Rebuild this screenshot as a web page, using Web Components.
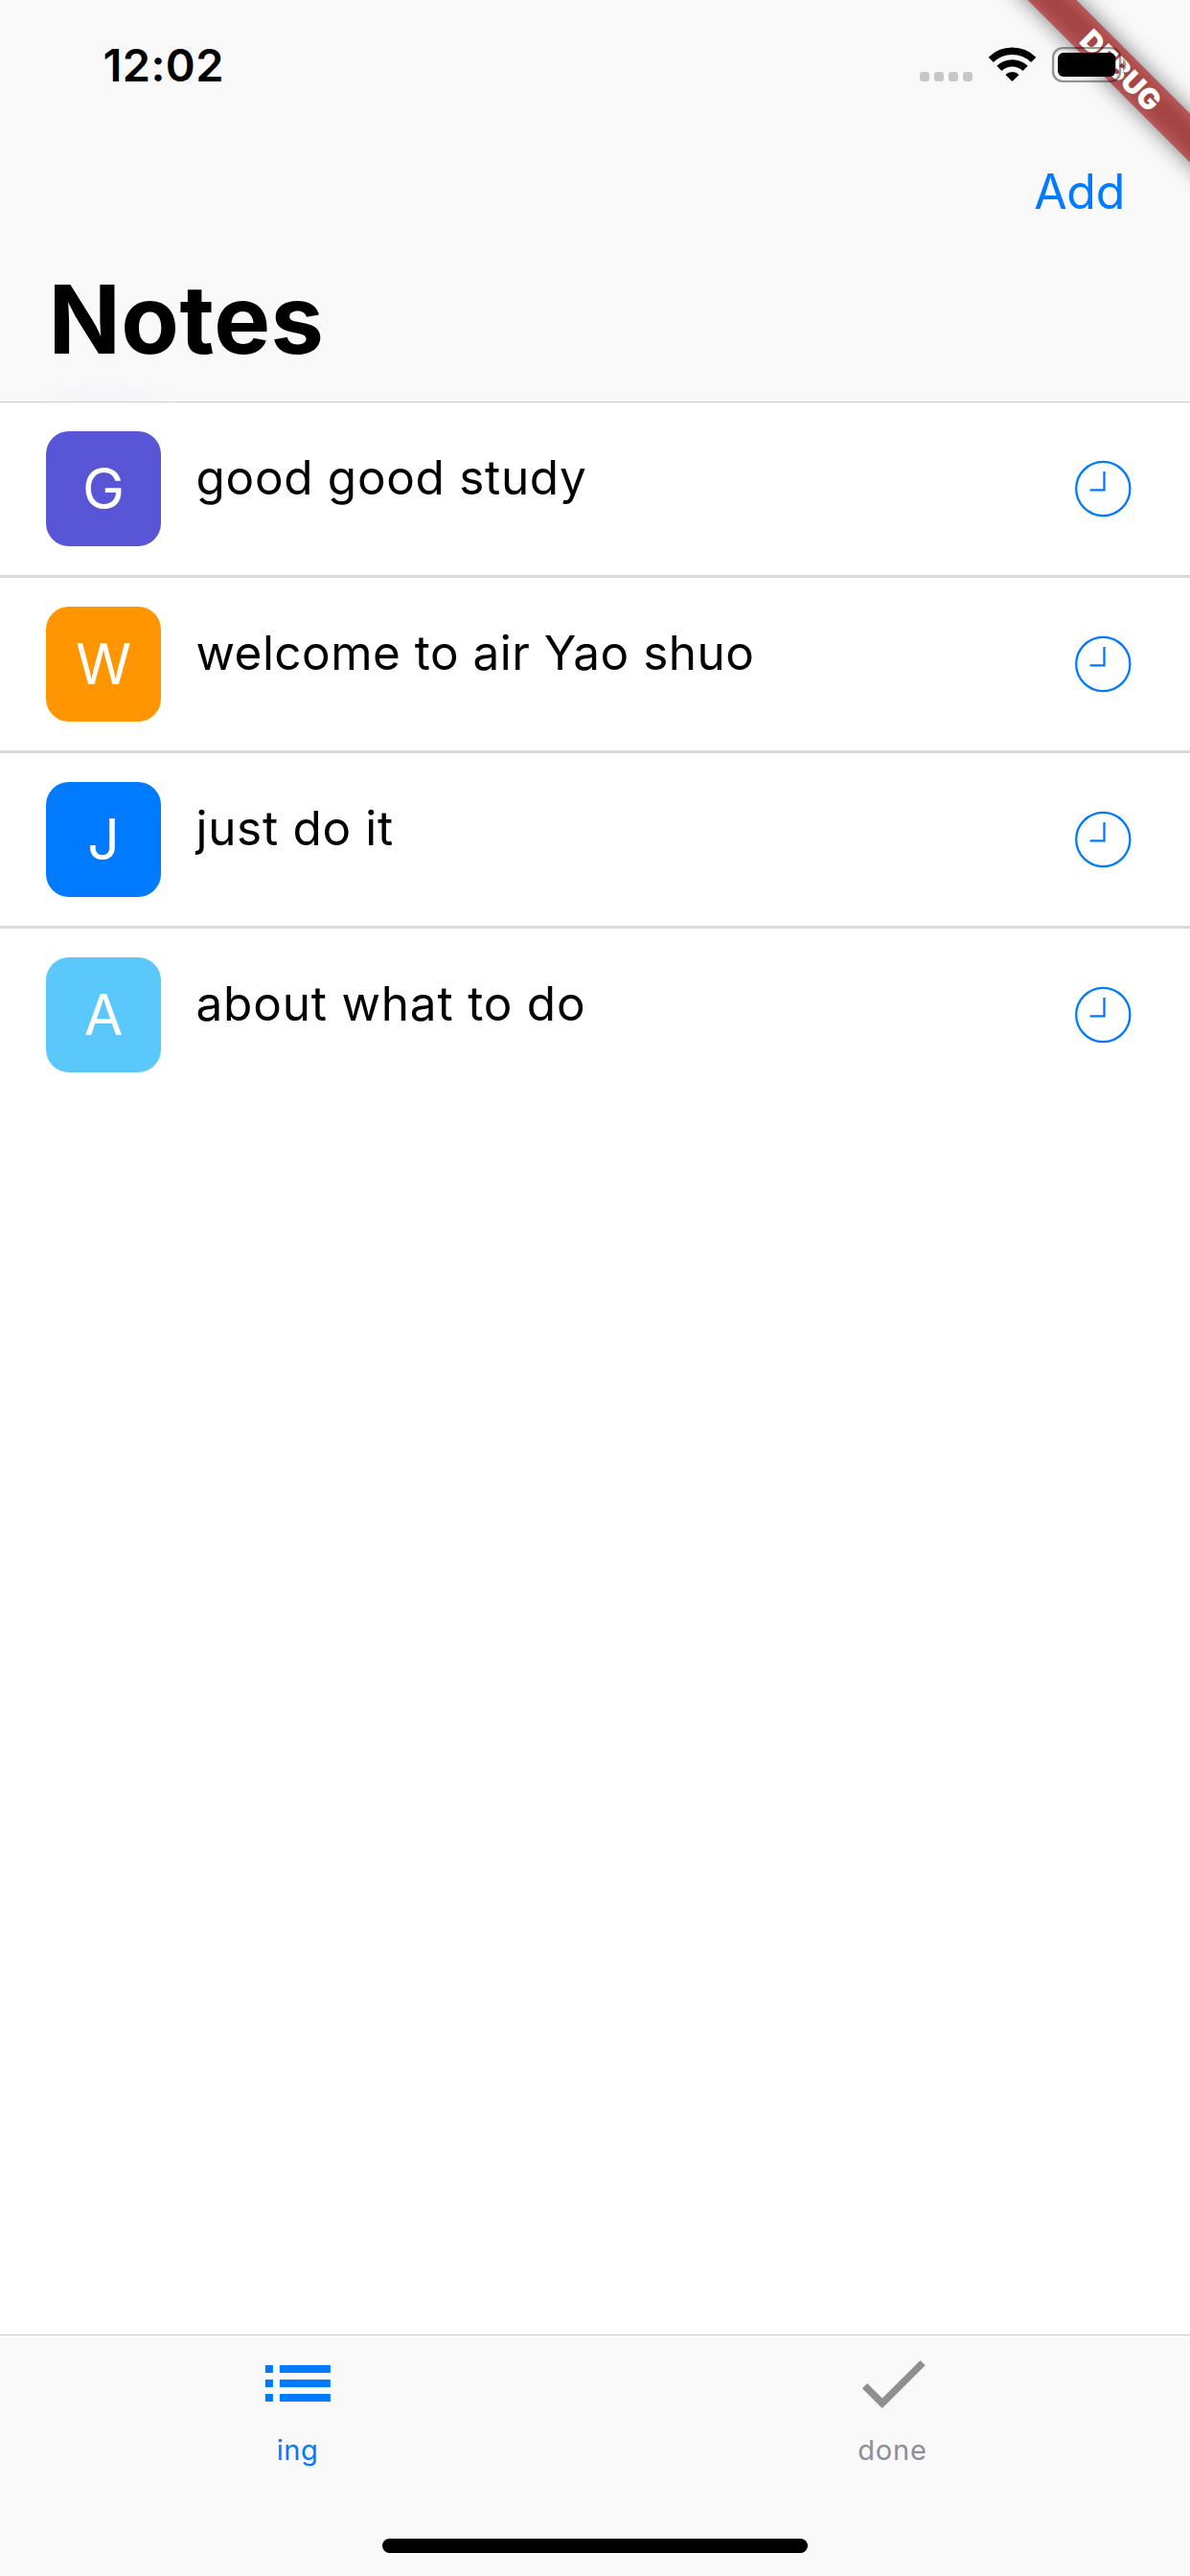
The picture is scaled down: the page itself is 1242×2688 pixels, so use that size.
<!DOCTYPE html>
<html lang="en">
<head>
<meta charset="utf-8">
<title>Notes</title>
<style>
html,body{margin:0;background:#fff}
body{font-family:Inter,"Liberation Sans",sans-serif;color:#000;width:1242px;height:2688px;overflow:hidden}
</style>
</head>
<body>
<notes-app></notes-app>
<script>
const define = (name, html) => {
  const tpl = document.createElement('template');
  tpl.innerHTML = html;
  customElements.define(name, class extends HTMLElement {
    constructor() {
      super();
      this.attachShadow({ mode: 'open' }).append(tpl.content.cloneNode(true));
    }
  });
};

define('debug-banner', `
<style>
:host{position:absolute;top:0;right:0;width:260px;height:260px;overflow:hidden;pointer-events:none}
.shadow,.band{position:absolute;left:38.25px;top:53.75px;width:300px;height:36px;transform:rotate(45deg)}
.shadow{background:rgba(0,0,0,.5);filter:blur(11.2px)}
.band{background:rgba(183,28,28,.627);color:#fff;font-weight:900;font-size:30px;line-height:36px;letter-spacing:.1px;text-align:center}
span{display:block;padding:1px 0 0 2px}
</style>
<div class="shadow"></div><div class="band"><span><slot></slot></span></div>`);

define('status-bar', `
<style>
:host{display:flex;position:relative;z-index:2;height:132px;box-sizing:border-box;padding:0 63px 0 107.5px;justify-content:space-between;align-items:flex-start}
.time{font-weight:600;font-size:47px;line-height:60px;letter-spacing:.41px;margin-top:38px}
.icons{display:flex;margin-top:40px}
svg{display:block}
</style>
<div class="time"><slot></slot></div>
<div class="icons">
<svg width="229" height="54" viewBox="950 40 229 54">
<g fill="#c7c7c7"><rect x="960" y="75" width="10" height="10" rx="3"/><rect x="975" y="75" width="10" height="10" rx="3"/><rect x="990" y="75" width="10" height="10" rx="3"/><rect x="1005" y="75" width="10" height="10" rx="3"/></g>
<g fill="none" stroke="#000"><path stroke-width="7.4" d="M1034.3 62.4A31.6 31.6 0 0 1 1078.7 62.4"/><path stroke-width="7.4" d="M1042.9 71.4A19.4 19.4 0 0 1 1070.1 71.4"/></g>
<path d="M1049.4 77.9A10 10 0 0 1 1063.6 77.9L1056.5 85Z"/>
<rect x="1099.1" y="50.1" width="70" height="34.8" rx="10" fill="none" stroke="#000" stroke-opacity=".4" stroke-width="2.4"/>
<path d="M1172 61.5A8 8 0 0 1 1172 74.5Z" opacity=".4"/>
<rect x="1104" y="55" width="60.3" height="25" rx="6"/>
</svg></div>`);

define('nav-header', `
<style>
:host{display:flex;flex-direction:column;height:288px;box-sizing:border-box;border-bottom:1px solid #cfcfd1}
.actions{display:flex;justify-content:flex-end;align-items:center;height:132px;box-sizing:border-box;padding:4px 68px 0 0;color:#007aff;font-size:50px;line-height:60px;letter-spacing:-.3px}
h1{margin:9px 0 0;padding-left:50.5px;font-weight:700;font-size:99px;line-height:120px;letter-spacing:.39px}
</style>
<div class="actions"><slot name="action"></slot></div><h1><slot></slot></h1>`);

define('note-row', `
<style>
:host{display:flex;box-sizing:border-box;height:183px;padding:30px 61px 30px 48px;border-bottom:3px solid #d9d9d9}
:host([last]){border-bottom-color:transparent}
.avatar{width:120px;height:120px;border-radius:24px;background:var(--tint);color:#fff;font-size:59px;line-height:120px;text-align:center;flex:none}
.text{flex:1;margin:18px 0 0 36.5px;font-size:49.5px;line-height:60px;letter-spacing:var(--track);white-space:nowrap}
svg{display:block;margin-top:30px}
</style>
<div class="avatar"><slot name="initial"></slot></div>
<div class="text"><slot></slot></div>
<svg width="60" height="60" viewBox="1121 480 60 60" fill="none" stroke="#007aff" stroke-width="2.3"><circle cx="1151.3" cy="510" r="28.1"/><path d="M1152.5 492V511.3H1137.7"/></svg>`);

define('tab-item', `
<style>
:host{display:flex;flex:1;flex-direction:column;align-items:center;color:#8e8e93;font-size:29px;line-height:36px;letter-spacing:.8px}
:host([active]){color:#007aff;letter-spacing:.57px}
.label{margin-top:2px}
</style>
<slot name="icon"></slot><div class="label"><slot></slot></div>`);

define('tab-bar', `
<style>
:host{display:flex;flex-direction:column;justify-content:space-between;height:252px;box-sizing:border-box;background:#f9f9f9;border-top:1px solid #cfcfd1}
.tabs{display:flex}
.home{width:444px;height:15px;border-radius:7.5px;background:#000;align-self:center;margin-bottom:24px}
</style>
<div class="tabs"><slot></slot></div><div class="home"></div>`);

define('notes-app', `
<style>
:host{display:flex;flex-direction:column;position:relative;width:1242px;height:2688px;background:#fff;overflow:hidden}
.top{background:radial-gradient(ellipse 85px 24px at 108px 419px,#f4f4f9,#f9f9f9)}
main{flex:1}
svg{display:block}
</style>
<div class="top"><status-bar>12:02</status-bar>
<nav-header><span slot="action">Add</span>Notes</nav-header></div>
<main>
<note-row style="--tint:#5856d6;--track:.68px"><span slot="initial">G</span>good good study</note-row>
<note-row style="--tint:#ff9500;--track:.47px"><span slot="initial">W</span>welcome to air Yao shuo</note-row>
<note-row style="--tint:#007aff;--track:.68px"><span slot="initial">J</span>just do it</note-row>
<note-row last style="--tint:#5ac8fa;--track:.8px"><span slot="initial">A</span>about what to do</note-row>
</main>
<tab-bar>
<tab-item active><svg slot="icon" width="100" height="100" viewBox="260.5 2437 100 100" fill="#007aff"><path d="M276.4 2468h8v8h-8zM276.4 2483h8v8h-8zM276.4 2498h8v8h-8zM291.4 2468h53v8h-53zM291.4 2483h53v8h-53zM291.4 2498h53v8h-53z"/></svg>ing</tab-item>
<tab-item><svg slot="icon" width="100" height="100" viewBox="881.5 2437 100 100" fill="#8e8e93"><path d="M899.4 2492.2L904.6 2487L920.3 2502.6L960 2462.9L965.2 2468.2L920.3 2513.1Z"/></svg>done</tab-item>
</tab-bar>
<debug-banner>DEBUG</debug-banner>`);
</script>
</body>
</html>
